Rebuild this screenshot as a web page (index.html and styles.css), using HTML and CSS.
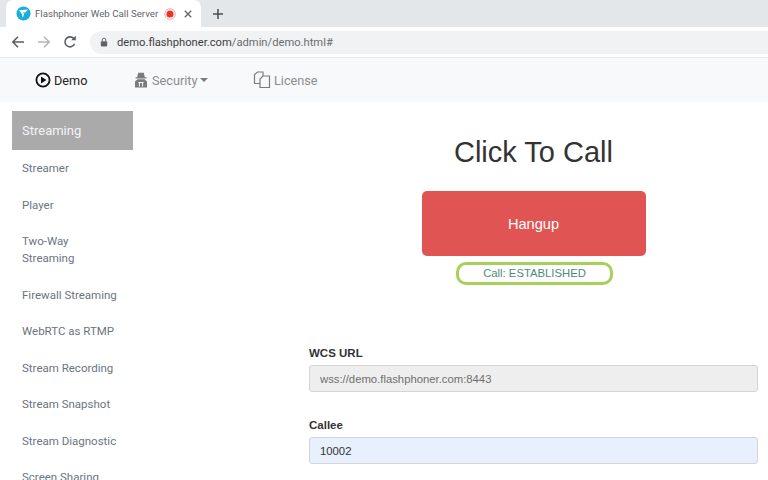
FILE: index.html
```html
<!DOCTYPE html>
<html lang="en">
<head>
<meta charset="utf-8">
<title>Flashphoner Web Call Server</title>
<link rel="stylesheet" href="styles.css">
</head>
<body>
<div class="tabstrip">
  <div class="tab">
    <svg class="favicon" viewBox="0 0 16 16"><circle cx="8" cy="8" r="7.5" fill="#14aee0"/><path d="M3.2 4.6 12.8 3.8 10 6.8H7L8.8 8.2 7.2 12.8 6.2 8.4Z" fill="#fff"/></svg>
    <span class="tab-title">Flashphoner Web Call Server</span>
    <svg class="rec" viewBox="0 0 12 12"><circle cx="6" cy="6" r="5.3" fill="none" stroke="#f5a9a5" stroke-width="1"/><circle cx="6" cy="6" r="3.6" fill="#e8352b"/></svg>
    <svg class="tab-close" viewBox="0 0 10 10"><path d="M1 1 9 9M9 1 1 9" stroke="#5f6368" stroke-width="1.6"/></svg>
  </div>
  <svg class="newtab" viewBox="0 0 12 12"><path d="M6 1V11M1 6H11" stroke="#4a4d52" stroke-width="1.5"/></svg>
</div>
<div class="toolbar">
  <svg class="nav-icon" viewBox="0 0 14 14"><path d="M13 7H2M7 1.8 1.8 7 7 12.2" fill="none" stroke="#5a5d62" stroke-width="1.6"/></svg>
  <svg class="nav-icon" viewBox="0 0 14 14"><path d="M1 7H12M7 1.8 12.2 7 7 12.2" fill="none" stroke="#b4b6b9" stroke-width="1.6"/></svg>
  <svg class="nav-icon" viewBox="0 0 14 14"><path d="M11.6 8.8A5 5 0 1 1 10.6 3.4" fill="none" stroke="#5a5d62" stroke-width="1.6"/><path d="M8.2 5.2H12.8V0.8Z" fill="#5a5d62"/></svg>
  <div class="omnibox">
    <svg class="lock" viewBox="0 0 10 12"><path d="M2.8 5V3.4a2.2 2.2 0 0 1 4.4 0V5" fill="none" stroke="#5f6368" stroke-width="1.2"/><rect x="1" y="5" width="8" height="6.5" rx="1" fill="#5f6368"/></svg>
    <span class="url"><span class="host">demo.flashphoner.com</span>/admin/demo.html#</span>
  </div>
</div>
<nav class="navbar">
  <a class="nav-link active">
    <svg class="nav-svg" viewBox="0 0 16 16"><circle cx="8" cy="8" r="6.6" fill="none" stroke="#111" stroke-width="1.8"/><path d="M6 4.6 11.4 8 6 11.4Z" fill="#111"/></svg>
    Demo
  </a>
  <a class="nav-link security">
    <svg class="nav-svg" viewBox="0 0 16 16"><path d="M5.2 0.8H10.8L11.8 5.2H13.4V6.4H2.6V5.2H4.2Z" fill="#7b7b7b"/><path d="M4.5 7.2H11.5L14 9.5V15.4H2V9.5Z" fill="#7b7b7b"/><path d="M6.4 10.5V14.5M9.6 10.5V14.5M5.4 10.5H10.6" stroke="#f8f9fa" stroke-width="1"/></svg>
    Security<span class="caret"></span>
  </a>
  <a class="nav-link license">
    <svg class="nav-svg" viewBox="0 0 18 18"><path d="M7 12.5H1.5V3.5L4.5 1H10V5" fill="none" stroke="#7b7b7b" stroke-width="1.2"/><path d="M7 8 10 5H16.5V16.5H7Z" fill="#f8f9fa" stroke="#7b7b7b" stroke-width="1.2"/></svg>
    License
  </a>
</nav>
<div class="layout">
  <aside class="sidebar">
    <div class="side-head">Streaming</div>
    <ul class="side-list">
      <li>Streamer</li>
      <li>Player</li>
      <li>Two-Way<br>Streaming</li>
      <li>Firewall Streaming</li>
      <li>WebRTC as RTMP</li>
      <li>Stream Recording</li>
      <li>Stream Snapshot</li>
      <li>Stream Diagnostic</li>
      <li>Screen Sharing</li>
    </ul>
  </aside>
  <main class="content">
    <h1 class="title">Click To Call</h1>
    <button class="hangup">Hangup</button>
    <div class="status">Call: ESTABLISHED</div>
    <form class="form">
      <label class="field-label">WCS URL</label>
      <input class="field disabled" value="wss://demo.flashphoner.com:8443" disabled>
      <label class="field-label second">Callee</label>
      <input class="field filled" value="10002">
    </form>
  </main>
</div>
</body>
</html>
```
FILE: styles.css
```css
* { box-sizing: border-box; }
html, body { margin: 0; height: 480px; overflow: hidden; background: #fff; }
body { font-family: "Liberation Sans", Arial, sans-serif; }

.tabstrip { height: 27px; background: #e4e7ea; display: flex; align-items: center; padding-left: 6px; }
.tab { width: 195px; height: 27px; background: #fff; border-radius: 7px 7px 0 0; display: flex; align-items: center; padding-left: 10px; }
.favicon { width: 15px; height: 15px; flex: none; }
.tab-title { font: 9.7px Roboto, sans-serif; color: #5f6368; margin-left: 4px; white-space: nowrap; width: 129px; }
.rec { width: 12px; height: 12px; flex: none; margin-right: 8px; }
.tab-close { width: 8px; height: 8px; flex: none; }
.newtab { width: 12px; height: 12px; margin-left: 11px; }

.toolbar { height: 31px; background: #fff; border-bottom: 1px solid #e9e9ea; display: flex; align-items: center; padding: 0 0 0 11px; gap: 12px; }
.nav-icon { width: 14px; height: 14px; flex: none; }
.omnibox { flex: 1; height: 23px; background: #f1f2f4; border-radius: 12px 0 0 12px; display: flex; align-items: center; padding-left: 10px; margin-left: 1px; }
.lock { width: 8px; height: 10px; flex: none; }
.url { font: 11.2px Roboto, sans-serif; color: #6a6d72; margin-left: 9px; white-space: nowrap; }
.host { color: #3c4043; }

.navbar { height: 44px; background: #f8f9fa; display: flex; align-items: center; padding-left: 35px; font: 12.7px Roboto, sans-serif; color: #8a8d90; }
.nav-link { display: flex; align-items: center; gap: 3px; }
.nav-link.active { color: #222; width: 98px; }
.nav-link.security { width: 120px; }
.nav-svg { width: 16px; height: 16px; flex: none; }
.license .nav-svg { width: 18px; height: 18px; }
.caret { width: 0; height: 0; border: 4px solid transparent; border-top-color: #7b7b7b; border-bottom: 0; margin-left: 0; margin-top: -1px; }

.layout { display: flex; padding: 9px 10px 0 12px; }
.sidebar { width: 121px; flex: none; font: 11.5px/17px Roboto, sans-serif; color: #6b7480; }
.side-head { height: 39px; background: #aaa; color: #f4f4f4; font-size: 13px; display: flex; align-items: center; padding-left: 10px; }
.side-list { list-style: none; margin: 0; padding: 0; }
.side-list li { padding: 10.4px 10px 9.1px; }

.content { flex: 1; min-width: 0; display: flex; flex-direction: column; align-items: center; padding-left: 176px; }
.title { font-weight: 400; font-size: 29px; line-height: 36px; color: #333; margin: 23px 0 0; }
.hangup { width: 224px; height: 65px; margin-top: 21px; background: #e05554; color: #fff; border: 0; border-radius: 5px; font: 14.6px "Liberation Sans", Arial, sans-serif; }
.status { width: 157px; height: 23px; margin: 6px 0 0 2px; border: 3px solid #a6d159; border-radius: 10px; color: #4d8b78; font-size: 11.3px; line-height: 17px; text-align: center; }
.form { width: 100%; margin-top: 60px; display: flex; flex-direction: column; }
.field-label { font-size: 11.5px; font-weight: 700; color: #333; line-height: 16px; margin-bottom: 4px; }
.field-label.second { margin-top: 25px; }
.field { width: 449px; height: 27px; border: 1px solid #d4d4d4; border-radius: 3px; padding: 0 10px; font: 11.3px "Liberation Sans", Arial, sans-serif; }
.disabled { background: #eee; color: #6e6e6e; }
.filled { background: #e8f0fe; color: #333; }
```
